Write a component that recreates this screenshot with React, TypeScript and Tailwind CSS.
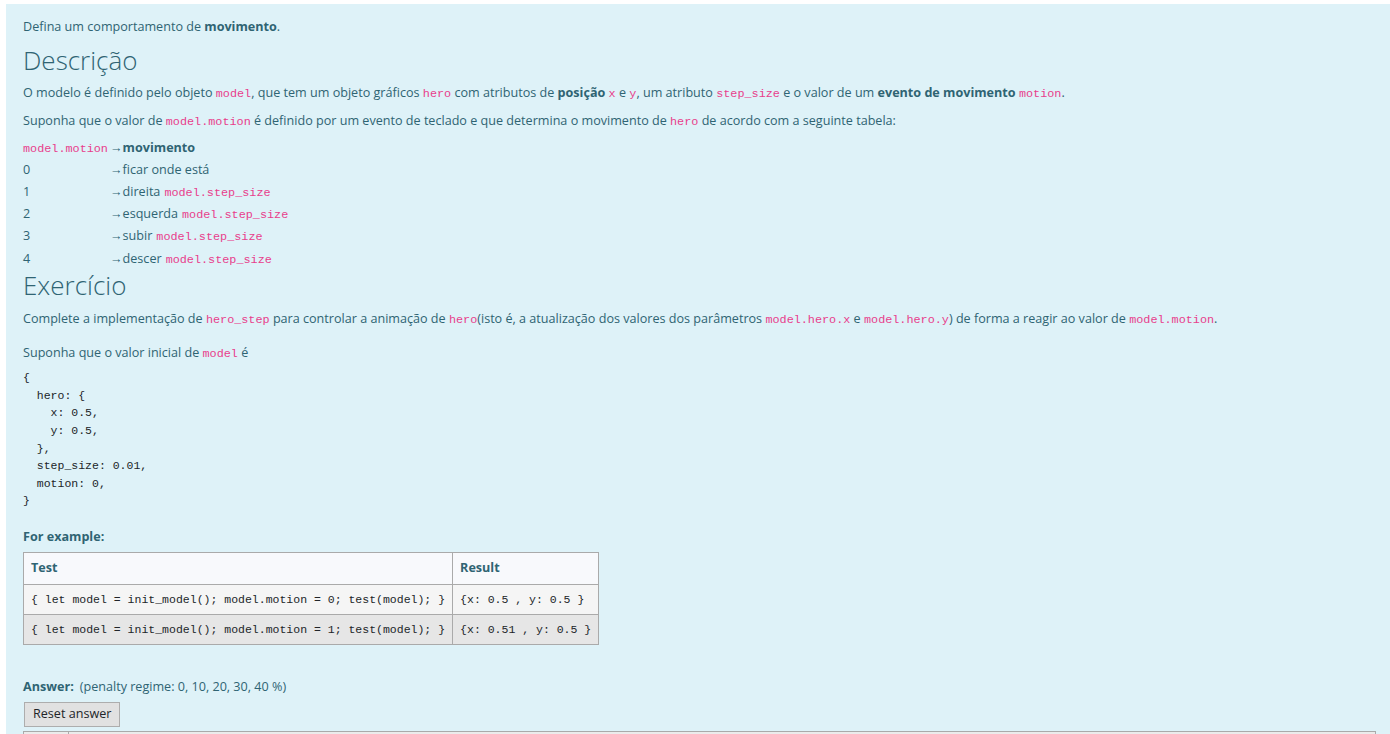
const C = ({ children }: { children: React.ReactNode }) => (
  <code className="font-['Liberation_Mono',monospace] text-[11.8px] leading-none text-[#e83e8c]">{children}</code>
);

const motions = [
  { n: '0', label: 'ficar onde está', code: false },
  { n: '1', label: 'direita', code: true },
  { n: '2', label: 'esquerda', code: true },
  { n: '3', label: 'subir', code: true },
  { n: '4', label: 'descer', code: true },
];

const initModel = `{
  hero: {
    x: 0.5,
    y: 0.5,
  },
  step_size: 0.01,
  motion: 0,
}`;

const examples = [
  { test: '{ let model = init_model(); model.motion = 0; test(model); }', result: '{x: 0.5 , y: 0.5 }', bg: 'bg-[#f5f5f5]' },
  { test: '{ let model = init_model(); model.motion = 1; test(model); }', result: '{x: 0.51 , y: 0.5 }', bg: 'bg-[#e6e6e6]' },
];

export default function App() {
  return (
    <div className="min-h-screen bg-white pl-[6px] pt-[4px] font-['Open_Sans',sans-serif] text-[12.6px] text-[#2f6473]">
      <div className="bg-[#def2f8] pl-[17px] pt-[13px] h-[730px] overflow-hidden">
        <p className="leading-[20px]">
          Defina um comportamento de <b>movimento</b>.
        </p>

        <h3 className="mt-[8px] text-[26px] font-light leading-[30px]">Descrição</h3>
        <p className="mt-[8px] leading-[20px]">
          O modelo é definido pelo objeto <C>model</C>, que tem um objeto gráficos <C>hero</C> com atributos de{' '}
          <b>posição</b> <C>x</C> e <C>y</C>, um atributo <C>step_size</C> e o valor de um <b>evento de movimento</b>{' '}
          <C>motion</C>.
        </p>
        <p className="mt-[8px] leading-[20px]">
          Suponha que o valor de <C>model.motion</C> é definido por um evento de teclado e que determina o movimento de{' '}
          <C>hero</C> de acordo com a seguinte tabela:
        </p>

        <div className="mt-[6px] flex flex-col">
          <div className="flex h-[22.2px] items-center">
            <span className="w-[87px]"><C>model.motion</C></span>
            <span>→</span>
            <b>movimento</b>
          </div>
          {motions.map((m) => (
            <div key={m.n} className="flex h-[22.2px] items-center">
              <span className="w-[87px]">{m.n}</span>
              <span>→</span>
              <span>{m.label}</span>
              {m.code && <span className="ml-[4px]"><C>model.step_size</C></span>}
            </div>
          ))}
        </div>

        <h3 className="mt-[0px] text-[26px] font-light leading-[30px]">Exercício</h3>
        <p className="mt-[9px] leading-[20px]">
          Complete a implementação de <C>hero_step</C> para controlar a animação de <C>hero</C>(isto é, a atualização dos
          valores dos parâmetros <C>model.hero.x</C> e <C>model.hero.y</C>) de forma a reagir ao valor de{' '}
          <C>model.motion</C>.
        </p>
        <p className="mt-[14px] leading-[20px]">
          Suponha que o valor inicial de <C>model</C> é
        </p>
        <pre className="mt-[6px] font-['Liberation_Mono',monospace] text-[11.5px] leading-[17.6px] text-[#212529]">
          {initModel}
        </pre>

        <p className="mt-[17px] font-bold leading-[20px]">For example:</p>
        <table className="mt-[5px] border-collapse border border-[#aaaaaa]">
          <thead>
            <tr className="bg-[#f8f9fc] h-[32px]">
              <th className="border border-[#aaaaaa] px-[7px] text-left font-bold">Test</th>
              <th className="border border-[#aaaaaa] px-[7px] text-left font-bold">Result</th>
            </tr>
          </thead>
          <tbody>
            {examples.map((e) => (
              <tr key={e.test} className={`${e.bg} h-[30px]`}>
                <td className="border border-[#aaaaaa] px-[7px] font-['Liberation_Mono',monospace] text-[11.5px] text-[#212529]">
                  {e.test}
                </td>
                <td className="border border-[#aaaaaa] px-[7px] font-['Liberation_Mono',monospace] text-[11.5px] text-[#212529]">
                  {e.result}
                </td>
              </tr>
            ))}
          </tbody>
        </table>

        <p className="mt-[32px] leading-[20px]">
          <b>Answer:</b>
          <span className="ml-[6px]">(penalty regime: 0, 10, 20, 30, 40 %)</span>
        </p>
        <button className="mt-[5px] ml-[1px] h-[25px] border border-[#adadad] bg-[#e1e1e1] px-[8px] text-[12.6px] text-[#212529]">
          Reset answer
        </button>
        <div className="mt-[4px] mr-[14px] flex h-[40px] border-t border-l border-r border-[#aaaaaa] bg-[#ebebeb]">
          <div className="w-[45px] border-r border-[#aaaaaa]" />
        </div>
      </div>
    </div>
  );
}
